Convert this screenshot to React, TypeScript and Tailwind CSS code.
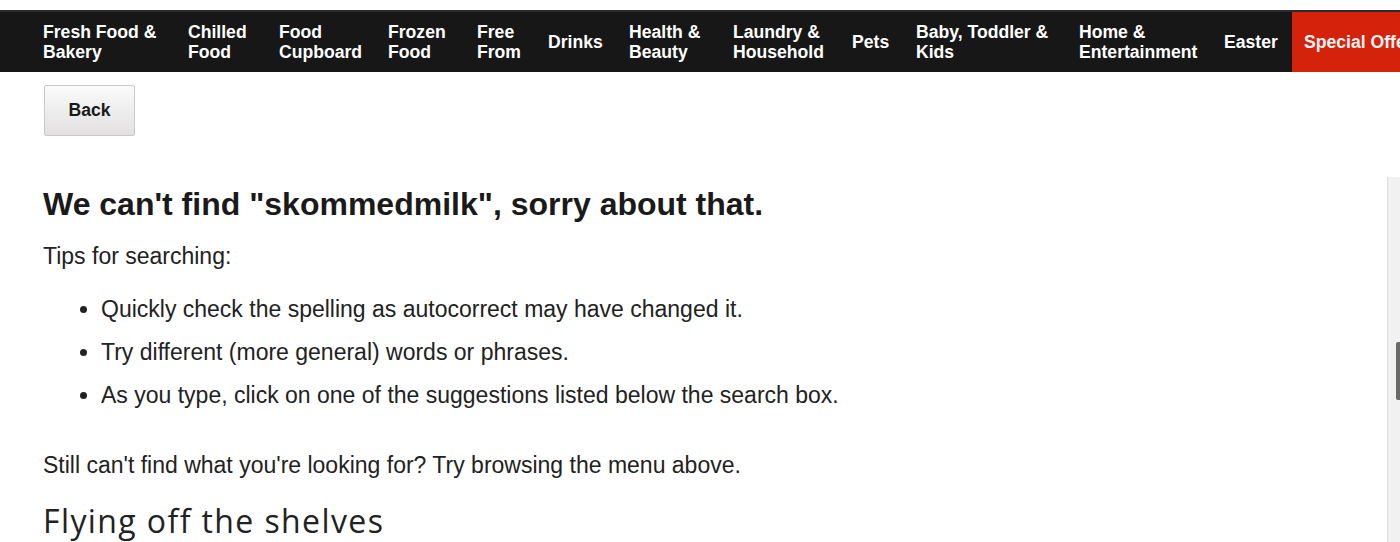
import React from "react";

const items: { label: string[]; w: number }[] = [
  { label: ["Fresh Food &", "Bakery"], w: 145 },
  { label: ["Chilled", "Food"], w: 91 },
  { label: ["Food", "Cupboard"], w: 109 },
  { label: ["Frozen", "Food"], w: 89 },
  { label: ["Free", "From"], w: 71 },
  { label: ["Drinks"], w: 81 },
  { label: ["Health &", "Beauty"], w: 104 },
  { label: ["Laundry &", "Household"], w: 119 },
  { label: ["Pets"], w: 64 },
  { label: ["Baby, Toddler &", "Kids"], w: 163 },
  { label: ["Home &", "Entertainment"], w: 145 },
  { label: ["Easter"], w: 68 },
];

export default function App() {
  return (
    <div className="relative w-[1400px] h-[542px] overflow-hidden bg-white text-[#1c1c1c]" style={{ fontFamily: '"Liberation Sans", Arial, sans-serif' }}>
      <div className="h-[10px]" />
      <nav className="flex h-[62px] bg-[#171717] border-t-2 border-[#2b2b2b] pl-[43px] text-white font-bold text-[17.6px] leading-[20px]">
        {items.map((it, i) => (
          <div key={i} className="flex flex-col justify-center shrink-0" style={{ width: it.w }}>
            {it.label.map((l, j) => (
              <span key={j} className="whitespace-nowrap">{l}</span>
            ))}
          </div>
        ))}
        <div className="flex items-center bg-[#d5220b] pl-[12px] flex-1 min-w-0 overflow-hidden whitespace-nowrap text-[#f4f4f4]">Special Offers</div>
      </nav>

      <div className="pl-[44px] pt-[13px]">
        <button className="w-[91px] h-[51px] rounded-[2px] border border-[#c9c9c9] bg-gradient-to-b from-[#fbfbfb] to-[#e2e0e0] font-bold text-[17.6px] text-[#1a1a1a]">Back</button>
      </div>

      <div className="pl-[43px]">
        <h1 className="mt-[49px] text-[32px] leading-[38px] font-bold text-[#1a1a1a]">We can't find "skommedmilk", sorry about that.</h1>
        <p className="mt-[19px] text-[23px] leading-[28px] text-[#222]">Tips for searching:</p>
        <ul className="mt-[25px] pl-[58px] list-disc text-[23px] leading-[28px] text-[#222] flex flex-col gap-[15px]">
          <li>Quickly check the spelling as autocorrect may have changed it.</li>
          <li>Try different (more general) words or phrases.</li>
          <li>As you type, click on one of the suggestions listed below the search box.</li>
        </ul>
        <p className="mt-[42px] text-[23px] leading-[28px] text-[#222]">Still can't find what you're looking for? Try browsing the menu above.</p>
        <h2 className="mt-[23px] text-[32px] leading-[38px] font-medium tracking-[1.4px] text-[#222]" style={{ fontFamily: '"Open Sans", Lato, sans-serif' }}>Flying off the shelves</h2>
      </div>

      <div className="absolute right-0 top-[177px] bottom-0 w-[13px] bg-[#f1f1f1] border-l border-[#dcdcdc]">
        <div className="absolute right-0 top-[165px] w-[4px] h-[58px] rounded-l-[2px] bg-[#6a6a66]" />
      </div>
    </div>
  );
}
